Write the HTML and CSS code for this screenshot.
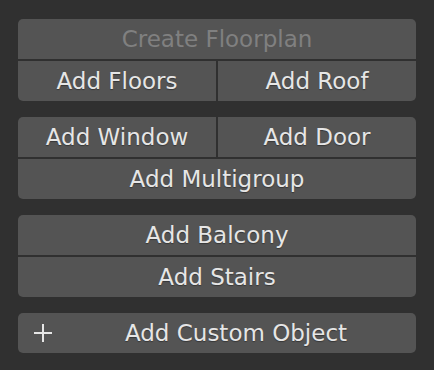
FILE: index.html
```html
<!DOCTYPE html>
<html>
<head>
	<title>Building Tools</title>
	<link rel="stylesheet" href="styles.css">
</head>
<body>
	<div class="panel">
		<div class="group">
			<div class="btn is-disabled">Create Floorplan</div>
			<div class="row">
				<div class="btn">Add Floors</div>
				<div class="btn">Add Roof</div>
			</div>
		</div>

		<div class="group">
			<div class="row">
				<div class="btn">Add Window</div>
				<div class="btn">Add Door</div>
			</div>
			<div class="btn">Add Multigroup</div>
		</div>

		<div class="group">
			<div class="btn">Add Balcony</div>
			<div class="btn">Add Stairs</div>
		</div>

		<div class="group">
			<div class="btn btn-icon">
				<svg class="icon" width="20" height="20" viewBox="0 0 20 20">
					<path d="M10 1 V19 M1 10 H19" stroke="#e6e6e6" stroke-width="2" fill="none"/>
				</svg>
				<span class="label">Add Custom Object</span>
			</div>
		</div>
	</div>
</body>
</html>
```

FILE: styles.css
```css
body {
	margin: 0;
	background: #303030;
	font-family: "DejaVu Sans", sans-serif;
}

.panel {
	display: flex;
	flex-direction: column;
	gap: 16px;
	padding: 19px 18px 0 18px;
}

.group {
	display: flex;
	flex-direction: column;
	gap: 2px;
	border-radius: 5px;
	overflow: hidden;
}

.row {
	display: flex;
	gap: 2px;
}

.row .btn {
	flex: 1;
}

.btn {
	height: 40px;
	background: #545454;
	color: #e6e6e6;
	font-size: 23px;
	display: flex;
	align-items: center;
	justify-content: center;
	text-shadow: 0 1px 1px rgba(0, 0, 0, 0.35);
	white-space: nowrap;
}

.btn.is-disabled {
	color: #808080;
	text-shadow: none;
}

.btn-icon {
	justify-content: flex-start;
	padding-left: 15px;
}

.btn-icon .icon {
	flex: none;
}

.btn-icon .label {
	flex: 1;
	text-align: center;
	padding-left: 3px;
}
```
